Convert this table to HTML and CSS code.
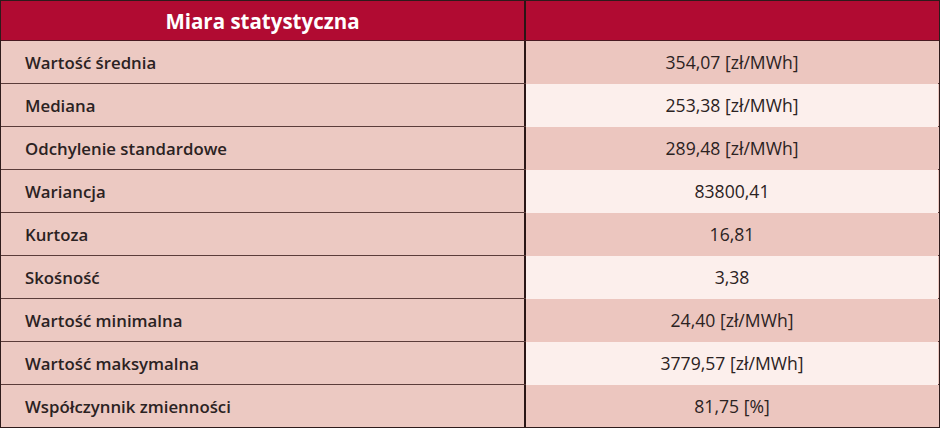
FILE: index.html
```html
<!DOCTYPE html>
<html lang="pl">
<head>
<meta charset="utf-8">
<link rel="stylesheet" href="styles.css">
</head>
<body>
<div class="table">
  <div class="row head">
    <div class="cell name">Miara statystyczna</div>
    <div class="sep"></div>
    <div class="cell val"></div>
  </div>
  <div class="row odd">
    <div class="cell name">Wartość średnia</div><div class="sep"></div><div class="cell val">354,07 [zł/MWh]</div>
  </div>
  <div class="row even">
    <div class="cell name">Mediana</div><div class="sep"></div><div class="cell val">253,38 [zł/MWh]</div>
  </div>
  <div class="row odd">
    <div class="cell name">Odchylenie standardowe</div><div class="sep"></div><div class="cell val">289,48 [zł/MWh]</div>
  </div>
  <div class="row even">
    <div class="cell name">Wariancja</div><div class="sep"></div><div class="cell val">83800,41</div>
  </div>
  <div class="row odd">
    <div class="cell name">Kurtoza</div><div class="sep"></div><div class="cell val">16,81</div>
  </div>
  <div class="row even">
    <div class="cell name">Skośność</div><div class="sep"></div><div class="cell val">3,38</div>
  </div>
  <div class="row odd">
    <div class="cell name">Wartość minimalna</div><div class="sep"></div><div class="cell val">24,40 [zł/MWh]</div>
  </div>
  <div class="row even">
    <div class="cell name">Wartość maksymalna</div><div class="sep"></div><div class="cell val">3779,57 [zł/MWh]</div>
  </div>
  <div class="row odd last">
    <div class="cell name">Współczynnik zmienności</div><div class="sep"></div><div class="cell val">81,75 [%]</div>
  </div>
</div>
</body>
</html>
```
FILE: styles.css
```css
html, body {
  margin: 0;
  padding: 0;
  background: #ffffff;
}
.table {
  box-sizing: border-box;
  width: 940px;
  height: 428px;
  border: 1px solid #2e1b1b;
  display: flex;
  flex-direction: column;
  font-family: "Open Sans", "Liberation Sans", sans-serif;
  color: #2b2222;
  background: #ecc9c2;
}
.row {
  display: flex;
  height: 42px;
  border-bottom: 1px solid #5b3c3a;
}
.row.last {
  border-bottom: none;
}
.row.head {
  height: 39px;
  background: #b10b32;
  border-bottom: 1px solid #4a1a22;
}
.cell {
  display: flex;
  align-items: center;
}
.name {
  width: 523px;
  padding-left: 24px;
  box-sizing: border-box;
  font-weight: 600;
  font-size: 16.8px;
  background: #ecc9c2;
}
.head .name {
  justify-content: center;
  padding-left: 0;
  color: #ffffff;
  font-size: 20.5px;
  font-weight: 700;
  background: #b10b32;
}
.sep {
  width: 2px;
  background: #2a1616;
}
.val {
  flex: 1;
  justify-content: center;
  font-size: 17.6px;
  margin-bottom: -1px;
  padding-bottom: 1px;
  margin-right: 1px;
}
.odd .val {
  background: #ecc6bf;
}
.even .val {
  background: #fcefec;
}
.head .val {
  background: #b10b32;
  margin-bottom: 0;
  padding-bottom: 0;
}
.last .val {
  margin-bottom: 0;
  padding-bottom: 0;
}
```
